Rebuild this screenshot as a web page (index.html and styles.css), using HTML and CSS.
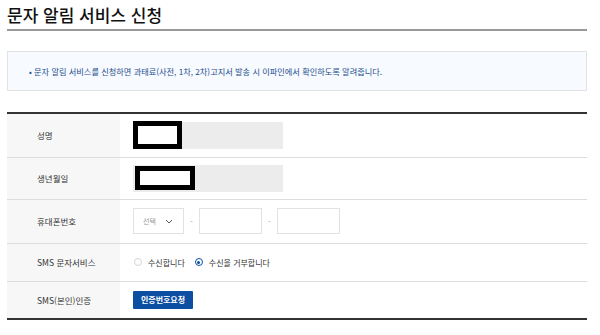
FILE: index.html
```html
<!DOCTYPE html>
<html lang="ko">
<head>
  <meta charset="UTF-8" />
  <meta name="viewport" content="width=device-width, initial-scale=1.0"/>
  <title>문자 알림 서비스 신청</title>
  <link rel="stylesheet" href="styles.css">
</head>
<body>
  <div class="wrap">
    <h1 class="title">문자 알림 서비스 신청</h1>

    <div class="notice">
      <p>• 문자 알림 서비스를 신청하면 과태료(사전, 1차, 2차)고지서 발송 시 이파인에서 확인하도록 알려줍니다.</p>
    </div>

    <table class="form-table">
      <tr class="row-name">
        <th>성명</th>
        <td>
          <div class="field-ro"><span class="mask mask-name"></span></div>
        </td>
      </tr>
      <tr class="row-birth">
        <th>생년월일</th>
        <td>
          <div class="field-ro"><span class="mask mask-birth"></span></div>
        </td>
      </tr>
      <tr class="row-phone">
        <th>휴대폰번호</th>
        <td>
          <div class="phone">
            <div class="sel">
              <span>선택</span>
              <svg width="8" height="5" viewBox="0 0 8 5"><path d="M1 1l3 3l3-3" fill="none" stroke="#444" stroke-width="0.9"/></svg>
            </div>
            <span class="dash">-</span>
            <div class="box"></div>
            <span class="dash">-</span>
            <div class="box"></div>
          </div>
        </td>
      </tr>
      <tr class="row-sms">
        <th>SMS 문자서비스</th>
        <td>
          <div class="radios">
            <label><span class="radio"></span>수신합니다</label>
            <label><span class="radio on"></span>수신을 거부합니다</label>
          </div>
        </td>
      </tr>
      <tr class="row-auth">
        <th>SMS(본인)인증</th>
        <td><button class="btn-auth">인증번호요청</button></td>
      </tr>
    </table>
  </div>
</body>
</html>
```

FILE: styles.css
```css
body {
  margin: 0;
  padding: 0;
  background: #fff;
  font-family: "Noto Sans CJK KR", "Noto Sans", sans-serif;
  color: #333;
}
.wrap {
  width: 580px;
  margin-left: 7px;
}
.title {
  margin: 0;
  padding-top: 3px;
  height: 26px;
  font-size: 17px;
  font-weight: 500;
  color: #111;
  line-height: 24px;
  border-bottom: 2px solid #999;
}
.notice {
  margin-top: 20px;
  height: 38px;
  border: 1px solid #e3e3e3;
  background: #f7faff;
  display: flex;
  align-items: center;
}
.notice p {
  margin: 0 0 0 21px;
  font-size: 8.2px;
  color: #1d4e8c;
}
.form-table {
  width: 100%;
  margin-top: 21px;
  border-collapse: collapse;
  border-top: 2px solid #333;
  border-bottom: 2px solid #333;
}
.form-table th,
.form-table td {
  padding: 0;
  border-bottom: 1px solid #ddd;
  font-size: 8.5px;
  vertical-align: middle;
}
.form-table th {
  width: 83px;
  padding-left: 30px;
  background: #f7f7f7;
  text-align: left;
  font-weight: 400;
  color: #333;
}
.form-table td {
  padding-left: 13px;
}
.row-name { height: 44px; }
.row-birth { height: 42px; }
.row-phone { height: 44px; }
.row-sms { height: 38px; }
.row-auth { height: 38px; }
.field-ro {
  width: 150px;
  height: 27px;
  background: #ececec;
  display: flex;
  align-items: center;
}
.mask {
  display: block;
  box-sizing: border-box;
  border: 5px solid #000;
  background: #fff;
}
.mask-name {
  width: 49px;
  height: 28px;
}
.mask-birth {
  width: 60px;
  height: 24px;
  margin-left: 2px;
}
.phone {
  display: flex;
  align-items: center;
}
.sel,
.box {
  box-sizing: border-box;
  height: 26px;
  border: 1px solid #e2e2e2;
  background: #fff;
}
.sel {
  width: 51px;
  display: flex;
  align-items: center;
  justify-content: space-between;
  padding: 0 10px 0 9px;
  font-size: 7px;
  color: #999;
}
.box {
  width: 63px;
}
.dash {
  width: 15px;
  text-align: center;
  color: #aaa;
  font-size: 8px;
}
.radios {
  display: flex;
  align-items: center;
  gap: 9px;
}
.radios label {
  display: flex;
  align-items: center;
  gap: 6px;
  font-size: 8px;
  color: #333;
}
.radio {
  box-sizing: border-box;
  width: 8px;
  height: 8px;
  margin-left: 1px;
  border: 1px solid #d5d5d5;
  border-radius: 50%;
  position: relative;
}
.radio.on {
  border-color: #0b4ea2;
}
.radio.on::after {
  content: "";
  position: absolute;
  left: 1.5px;
  top: 1.5px;
  width: 3px;
  height: 3px;
  border-radius: 50%;
  background: #0b4ea2;
}
.btn-auth {
  width: 60px;
  height: 18px;
  padding: 0;
  border: none;
  border-radius: 1px;
  background: #0b4ea2;
  color: #fff;
  font-family: inherit;
  font-size: 8px;
  font-weight: 700;
}
```
